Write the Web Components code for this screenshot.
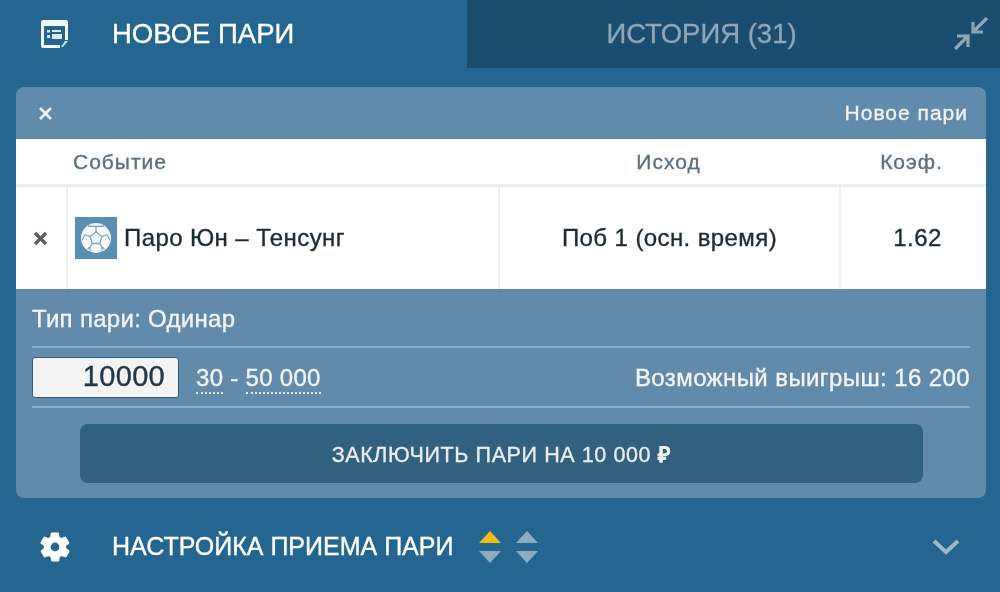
<!DOCTYPE html>
<html lang="ru">
<head>
<meta charset="utf-8">
<title>Новое пари</title>
<style>
html, body { margin: 0; padding: 0; background: #24668f; }
body { font-family: "Liberation Sans", Arial, sans-serif; }
</style>
</head>
<body>
<bet-app>
  <bet-tabs></bet-tabs>
  <bet-slip></bet-slip>
  <settings-bar></settings-bar>
</bet-app>

<script>
class BetApp extends HTMLElement {
  constructor() {
    super();
    this.attachShadow({ mode: "open" }).innerHTML = `
<style>
:host { display: flex; flex-direction: column; width: 1000px; height: 592px; background: #24668f; overflow: hidden; filter: blur(.7px); -webkit-text-stroke: .35px currentColor; }
</style>
<slot></slot>`;
  }
}

class BetTabs extends HTMLElement {
  constructor() {
    super();
    this.attachShadow({ mode: "open" }).innerHTML = `
<style>
:host { display: grid; grid-template-columns: 467px 1fr; height: 68px; font-size: 27.500px; }
.active { display: flex; align-items: center; color: #fff; padding-left: 41px; }
.active svg { width: 27px; height: 28px; margin-right: 44px; }
.other { display: flex; align-items: center; justify-content: center; background: #1a4d6e; color: #8ea7b7; position: relative; padding-right: 64px; }
.shrink { position: absolute; right: 12px; top: 17px; width: 36px; height: 34px; }
</style>
<div class="active">
  <svg viewBox="0 0 27 28"><path fill="#f4f8fa" d="M2 0h23a2 2 0 0 1 2 2v18h-3V6H3v19h16v3H2a2 2 0 0 1-2-2V2a2 2 0 0 1 2-2z"/><path fill="#dfe9ef" d="M6 10h3v2.500H6zM11 10h9v2H11zM6 15h3v3H6zM11 14h10v5H11z"/><path fill="#cddde6" d="M24 21h3l-5 6h-2z"/></svg>
  <span>НОВОЕ ПАРИ</span>
</div>
<div class="other">
  <span>ИСТОРИЯ (31)</span>
  <svg class="shrink" viewBox="0 0 36 34" fill="none" stroke="#8ea7b7" stroke-width="3.200"><path d="M35 1L21 15M21 5v10h10M3 32l13-13M5 19h11v11"/></svg>
</div>`;
  }
}

class BetSlip extends HTMLElement {
  constructor() {
    super();
    this.attachShadow({ mode: "open" }).innerHTML = `
<style>
:host { display: block; margin: 19px 14px 0 16px; background: #628bab; border-radius: 8px; color: #fff; height: 411px; overflow: hidden; }
.head { display: flex; align-items: center; justify-content: space-between; height: 52px; padding: 0 18px 0 22px; font-size: 21px; letter-spacing: 1px; color: #eef3f6; }
.head svg { width: 15px; height: 15px; }
.foot { padding: 0 16px; }
.type { height: 59px; padding-top: 2px; box-sizing: border-box; display: flex; align-items: center; font-size: 24px; letter-spacing: .3px; border-bottom: 2px solid #8fadc4; color: #f2f6f8; }
.stake { height: 60px; box-sizing: border-box; display: flex; align-items: center; border-bottom: 2px solid #8fadc4; }
.stake input { box-sizing: border-box; width: 147px; height: 41px; border: 1px solid #2f5f80; border-radius: 3px; background: #f3f3f3; font: 29px "Liberation Sans", Arial, sans-serif; letter-spacing: .3px; -webkit-text-stroke: .35px #22384a; color: #22384a; text-align: right; padding: 0 13px 2px 0; margin: 0 17px 0 0; outline: 0; }
.limit { font-size: 24px; letter-spacing: .3px; color: #f0f4f7; padding-top: 2px; }
.limit u { text-decoration: none; border-bottom: 2px dotted #e6eef3; padding-bottom: 1px; }
.win { margin-left: auto; font-size: 24px; letter-spacing: .4px; color: #f2f6f8; padding-top: 2px; }
.submit { display: block; box-sizing: border-box; width: 843px; height: 59px; margin: 16px 0 0 48px; border: 0; border-radius: 8px; background: #32607f; color: #e8eef2; font: 21.500px "Liberation Sans", Arial, sans-serif; letter-spacing: .6px; -webkit-text-stroke: .35px #e8eef2; }
.submit b { color: #fff; }
</style>
<div class="head">
  <svg viewBox="0 0 15 15" fill="none" stroke="#eef3f6" stroke-width="2.600"><path d="M2 2l11 11M13 2L2 13"/></svg>
  <span>Новое пари</span>
</div>
<slip-table></slip-table>
<div class="foot">
  <div class="type">Тип пари: Одинар</div>
  <div class="stake">
    <input value="10000" aria-label="Сумма">
    <span class="limit"><u>30</u> - <u>50 000</u></span>
    <span class="win">Возможный выигрыш: 16 200</span>
  </div>
  <button class="submit">ЗАКЛЮЧИТЬ ПАРИ НА 10 000 <b>₽</b></button>
</div>`;
  }
}

class SlipTable extends HTMLElement {
  constructor() {
    super();
    this.attachShadow({ mode: "open" }).innerHTML = `
<style>
:host { display: grid; grid-template-columns: 50px 432px 341px 147px; grid-template-rows: 48px 102px; background: #fff; color: #1f2a33; }
.th { display: flex; align-items: center; justify-content: center; font-size: 21px; letter-spacing: 1px; color: #5d6f7d; border-bottom: 3px solid #e9eef1; box-sizing: border-box; }
.th.ev { justify-content: flex-start; padding-left: 7px; }
.th.kf { padding-right: 2px; }
.td { display: flex; align-items: center; justify-content: center; font-size: 24px; letter-spacing: .4px; border-left: 2px solid #e9eef1; box-sizing: border-box; }
.x { border-left: 0; }
.x svg { width: 15px; height: 15px; margin-right: 2px; }
.ev-cell { justify-content: flex-start; padding-left: 7px; }
.kf-cell { padding-left: 8px; }
.ball { width: 42px; height: 42px; margin-right: 7px; background: #5a8fb5; flex: none; }
</style>
<div class="th"></div>
<div class="th ev">Событие</div>
<div class="th">Исход</div>
<div class="th kf">Коэф.</div>
<div class="td x"><svg viewBox="0 0 15 15" fill="none" stroke="#5f5f5f" stroke-width="3.400"><path d="M2 2l11 11M13 2L2 13"/></svg></div>
<div class="td ev-cell">
  <svg class="ball" viewBox="0 0 42 42"><circle cx="21" cy="21" r="15" fill="#f6f9fb"/><g fill="none" stroke="#7ea8c6" stroke-width="1.300"><path d="M21 15l6 4.500-2.300 7h-7.400l-2.300-7z"/><path d="M21 15V9.500M27 19.500l5-2M24.700 26.500l2.300 3.500M17.300 26.500L15 30M15 19.500l-5-2"/><path d="M13 9l8 .5 8-.5M10 17.500l-3 6M32 17.500l3 6M15 30l-2.500 2M27 30l2.500 2M15 30v5M27 30v5"/></g></svg>
  <span>Паро Юн – Тенсунг</span>
</div>
<div class="td">Поб 1 (осн. время)</div>
<div class="td kf-cell">1.62</div>`;
  }
}

class SettingsBar extends HTMLElement {
  constructor() {
    super();
    this.attachShadow({ mode: "open" }).innerHTML = `
<style>
:host { display: flex; align-items: center; height: 94px; padding: 3px 0 0 38px; color: #fff; font-size: 25px; box-sizing: border-box; }
.gear { width: 34px; height: 34px; margin-right: 40px; }
.arrows { width: 22px; height: 32px; margin-left: 15px; }
.chev { width: 28px; height: 18px; margin-left: auto; margin-right: 40px; }
</style>
<svg class="gear" viewBox="0 0 24 24"><path fill="#fff" stroke="#fff" stroke-width=".8" fill-rule="evenodd" d="M19.400 13c0-.3.1-.6.1-1s0-.7-.1-1l2.100-1.600c.2-.2.2-.4.1-.6l-2-3.500c-.1-.2-.4-.3-.6-.2l-2.500 1c-.5-.4-1.100-.7-1.700-1l-.4-2.600c0-.2-.2-.4-.5-.4h-4c-.2 0-.5.2-.5.400l-.4 2.600c-.6.3-1.200.6-1.700 1l-2.500-1c-.2-.1-.5 0-.6.2l-2 3.500c-.1.2-.1.5.1.6L4.600 11c0 .3-.1.7-.1 1s0 .7.1 1l-2.100 1.600c-.2.2-.2.4-.1.6l2 3.500c.1.2.4.3.6.2l2.500-1c.5.4 1.100.7 1.700 1l.4 2.600c0 .2.300.4.5.4h4c.2 0 .5-.2.5-.4l.4-2.600c.6-.3 1.200-.6 1.700-1l2.500 1c.2.1.5 0 .6-.2l2-3.500c.1-.2.1-.5-.1-.6zM12 15.500a3.500 3.500 0 1 1 0-7 3.500 3.500 0 0 1 0 7z"/></svg>
<span>НАСТРОЙКА ПРИЕМА ПАРИ</span>
<svg class="arrows" viewBox="0 0 22 32" style="margin-left:26px"><path fill="#f2b90f" d="M11 0l11 12H0z"/><path fill="#8fabc0" d="M11 32L0 20h22z"/></svg>
<svg class="arrows" viewBox="0 0 22 32"><path fill="#8fabc0" d="M11 0l11 12H0z"/><path fill="#8fabc0" d="M11 32L0 20h22z"/></svg>
<svg class="chev" viewBox="0 0 28 18" fill="none" stroke="#9db8ca" stroke-width="4"><path d="M2 3l12 11L26 3"/></svg>`;
  }
}

customElements.define("bet-app", BetApp);
customElements.define("bet-tabs", BetTabs);
customElements.define("bet-slip", BetSlip);
customElements.define("slip-table", SlipTable);
customElements.define("settings-bar", SettingsBar);
</script>
</body>
</html>
